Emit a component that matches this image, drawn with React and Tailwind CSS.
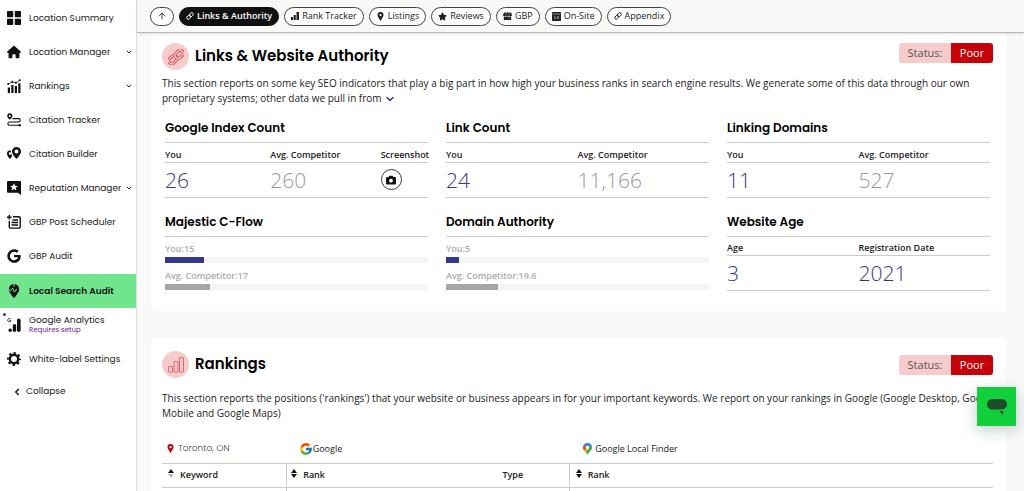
import { FaHouse, FaStar, FaCamera, FaGoogle } from "react-icons/fa6";
import { FcGoogle } from "react-icons/fc";
import { ArrowUp, ChevronDown, ChevronLeft } from "lucide-react";

const GridIcon = () => <svg viewBox="0 0 14 14" className="size-3.5" fill="currentColor">
    <rect width="6.2" height="6.2" rx="0.8" />
    <rect x="7.8" width="6.2" height="6.2" rx="0.8" />
    <rect y="7.8" width="6.2" height="6.2" rx="0.8" />
    <rect x="7.8" y="7.8" width="6.2" height="6.2" rx="0.8" />
  </svg>;

const TrendIcon = () => <svg viewBox="0 0 14 14" className="size-3.5" fill="currentColor">
    <path d="M0.8 8.5h2.2V14H0.8zM4.3 6h2.2v8H4.3zM7.8 7h2.2v7H7.8zM11.3 4.2h2.2V14h-2.2z" />
    <path d="M0.8 5.2 5 3l4 .8L13 1" fill="none" stroke="currentColor" strokeWidth="0.8" />
    <circle cx="1.2" cy="5" r="1" />
    <circle cx="5.2" cy="2.8" r="1" />
    <circle cx="9" cy="3.7" r="1" />
    <circle cx="12.8" cy="1.3" r="1" />
  </svg>;

const RouteIcon = () => <svg viewBox="0 0 14 14" className="size-3.5" fill="none">
    <path fillRule="evenodd" fill="currentColor" d="M2.8 0.3a2.6 2.6 0 0 1 2.6 2.6C5.4 4.5 2.8 6.6 2.8 6.6S0.2 4.5 0.2 2.9A2.6 2.6 0 0 1 2.8 0.3zM2.8 1.9a1 1 0 1 0 0 2 1 1 0 0 0 0-2z" />
    <path d="M5.5 5.6h6a1.7 1.7 0 0 1 0 3.4h-9a1.6 1.6 0 0 0 0 3.3h9.5" stroke="currentColor" strokeWidth="1.1" />
    <circle cx="12.7" cy="12.3" r="1.3" fill="currentColor" />
  </svg>;

const PinIcon = ({ className }) => <svg viewBox="0 0 24 24" className={className} fill="currentColor">
    <path fillRule="evenodd" d="M12 0a8 8 0 0 0-8 8c0 5 5 10 8 16 3-6 8-11 8-16a8 8 0 0 0-8-8zm0 5a3 3 0 1 1 0 6 3 3 0 0 1 0-6z" />
  </svg>;

const TwoPinsIcon = () => <svg viewBox="0 0 28 28" className="size-3.5" fill="currentColor">
    <path fillRule="evenodd" d="M19 0a9 9 0 0 0-9 9c0 6 9 15 9 15s9-9 9-15a9 9 0 0 0-9-9zm0 5a4 4 0 1 1 0 8 4 4 0 0 1 0-8z" />
    <path fillRule="evenodd" d="M6 7a6 6 0 0 0-6 6c0 5 6 11 6 11s3-3 4.5-6C8 14 7.5 11 8 7.5A6 6 0 0 0 6 7zm0 3.5a2.5 2.5 0 1 1 0 5 2.5 2.5 0 0 1 0-5z" />
  </svg>;

const ReviewIcon = () => <svg viewBox="0 0 14 14" className="size-3.5" fill="currentColor">
    <path fillRule="evenodd" d="M1 0h12a1 1 0 0 1 1 1v13l-3-2.2H1a1 1 0 0 1-1-1V1a1 1 0 0 1 1-1zM7 2.2 5.9 4.7l-2.7.3 2 1.8-.6 2.7L7 8.1l2.4 1.4-.6-2.7 2-1.8-2.7-.3z" />
  </svg>;

const PostIcon = () => <svg viewBox="0 0 14 14" className="size-3.5" fill="none" stroke="currentColor" strokeWidth="1.4">
    <path d="M6 1.7h6a1.2 1.2 0 0 1 1.2 1.2v9a1.2 1.2 0 0 1-1.2 1.2H3.5a1.2 1.2 0 0 1-1.2-1.2V6" />
    <path d="M2.3 0v4.6M0 2.3h4.6M5.5 5h5.5M4.5 7.5h6.5M4.5 10h6.5" />
  </svg>;

const AuditIcon = () => <svg viewBox="0 0 14 14" className="size-3.5">
    <path fill="currentColor" d="M7 0a5.2 5.2 0 0 0-5.2 5.2C1.8 8.8 7 14 7 14s5.2-5.2 5.2-8.8A5.2 5.2 0 0 0 7 0z" />
    <path d="M1 6.2h3.2L5.6 4l1.9 4.2 1.3-2.6H10M7 0v3" fill="none" stroke="#70e58d" strokeWidth="1" />
  </svg>;

const AnalyticsIcon = () => <svg viewBox="0 0 14 14" className="size-3.5" fill="currentColor">
    <rect x="10" y="0.5" width="3.6" height="13.5" rx="1.8" />
    <rect x="5.8" y="6" width="3.4" height="8" rx="1.7" />
    <circle cx="3.2" cy="12.3" r="1.7" />
    <path d="M3.7 0.9A1.7 1.7 0 1 0 4 2.7H2.4" fill="none" stroke="currentColor" strokeWidth="0.8" />
  </svg>;

const GearIcon = () => <svg viewBox="0 0 14 14" className="size-3.5" fill="none" stroke="currentColor">
    <circle cx="7" cy="7" r="4.2" strokeWidth="2.4" />
    <circle cx="7" cy="7" r="6" strokeWidth="1.9" strokeDasharray="2.35 2.362" strokeDashoffset="1.17" />
  </svg>;

const ChainIcon = ({ className }) => <svg viewBox="0 0 24 24" className={className} fill="none" stroke="currentColor" strokeWidth="2.8" strokeLinecap="round">
    <g transform="rotate(-45 12 12)">
      <rect x="0" y="7.5" width="13" height="9" rx="4.5" />
      <rect x="11" y="7.5" width="13" height="9" rx="4.5" />
    </g>
  </svg>;

// hollow chain: a wide red stroke with a narrower pink one laid over it
const OutlineChainIcon = () => <svg viewBox="0 0 24 24" className="size-4" fill="none">
    <g transform="rotate(-45 12 12)">
      <rect x="-1" y="7" width="14" height="9" rx="4.5" stroke="#d9474d" strokeWidth="4.6" />
      <rect x="-1" y="7" width="14" height="9" rx="4.5" stroke="#f7cacb" strokeWidth="2" />
      <rect x="11" y="8" width="14" height="9" rx="4.5" stroke="#d9474d" strokeWidth="4.6" />
      <rect x="11" y="8" width="14" height="9" rx="4.5" stroke="#f7cacb" strokeWidth="2" />
    </g>
  </svg>;

const OutlineBarsIcon = () => <svg viewBox="0 0 16 16" className="size-4" fill="none" stroke="#e06469">
    <rect x="0.5" y="9.5" width="4" height="5.5" rx="0.5" />
    <rect x="6" y="4.5" width="4" height="10.5" rx="0.5" />
    <rect x="11.5" y="0.5" width="4" height="14.5" rx="0.5" />
  </svg>;

const BarsIcon = () => <svg viewBox="0 0 8 8" className="size-2" fill="currentColor">
    <path d="M0 5h2v3H0zM2.6 3h2.2v5H2.6zM5.5 0H8v8H5.5z" />
  </svg>;

const StoreIcon = () => <svg viewBox="0 0 9 8" className="h-2 w-[9px]" fill="currentColor">
    <path d="M1 0.5h7L9 3.2a1.2 1.2 0 0 1-2.2.4 1.3 1.3 0 0 1-2.3 0 1.3 1.3 0 0 1-2.3 0A1.2 1.2 0 0 1 0 3.2z" />
    <path d="M.8 4.6h7.4V8H.8z" />
    <path d="M5.3 6h1.6M3 .5v2.3M6 .5v2.3" stroke="#fff" strokeWidth="0.4" />
  </svg>;

const BrowserIcon = () => <svg viewBox="0 0 9 9" className="size-[9px]">
    <rect width="9" height="9" rx="0.8" fill="currentColor" />
    <path d="M0.5 2h8" stroke="#fff" strokeWidth="0.5" />
    <path d="M3.8 4.5H2.5v2h1.3V5.7M5.3 4.5h1.3v2H5.3z" stroke="#fff" strokeWidth="0.4" fill="none" />
  </svg>;

const MapsIcon = () => <svg viewBox="0 0 18 24" className="h-3 w-[9px]">
    <path fill="#34a853" d="M9 0a9 9 0 0 0-9 9c0 6 7 8 9 15 2-7 9-9 9-15a9 9 0 0 0-9-9z" />
    <path fill="#4285f4" d="M2 3.5A9 9 0 0 1 17 5L9 9z" />
    <path fill="#ea4335" d="M2 3.3 9 9l-6 6.3C1 13 0 11.5 0 9a9 9 0 0 1 2-5.7z" />
    <path fill="#fbbc04" d="M2.6 15 10 6.5l2 5.5-6.5 6.2C4.5 17 3.3 16 2.6 15z" />
    <circle cx="9" cy="9" r="3.3" fill="#fff" />
  </svg>;

const SortIcon = ({ up = false }) => <svg viewBox="0 0 6 9" className="mb-1 h-[9px] w-1.5">
    <path d="M3 0l3 4H0z" fill="#111" />
    <path d="M3 9l3-4H0z" fill={up ? "#bbb" : "#111"} />
  </svg>;

const navItems = [
  { label: "Location Summary", icon: <GridIcon /> },
  { label: "Location Manager", icon: <FaHouse className="size-3.5" />, expandable: true },
  { label: "Rankings", icon: <TrendIcon />, expandable: true },
  { label: "Citation Tracker", icon: <RouteIcon /> },
  { label: "Citation Builder", icon: <TwoPinsIcon /> },
  { label: "Reputation Manager", icon: <ReviewIcon />, expandable: true },
  { label: "GBP Post Scheduler", icon: <PostIcon /> },
  { label: "GBP Audit", icon: <FaGoogle className="size-3.5" /> },
  { label: "Local Search Audit", icon: <AuditIcon />, active: true },
  { label: "Google Analytics", icon: <AnalyticsIcon />, note: "Requires setup" },
  { label: "White-label Settings", icon: <GearIcon /> }
];

const tabs = [
  { label: "Links & Authority", icon: <ChainIcon className="size-2" />, active: true },
  { label: "Rank Tracker", icon: <BarsIcon /> },
  { label: "Listings", icon: <PinIcon className="size-[9px]" /> },
  { label: "Reviews", icon: <FaStar className="size-[9px]" /> },
  { label: "GBP", icon: <StoreIcon /> },
  { label: "On-Site", icon: <BrowserIcon /> },
  { label: "Appendix", icon: <ChainIcon className="size-2" /> }
];

const Sidebar = () => {
  return <nav className="w-[137px] shrink-0 border-r border-[#ddd] bg-white pt-px font-['Poppins','Inter',sans-serif] text-[9px] text-[#222]">
      <ul>
        {navItems.map(item => <li key={item.label}>
            <a href="#" className={item.active ? "mt-px flex h-[34px] items-center gap-2 bg-[#70e58d] px-[7px] font-semibold text-[#111]" : "relative flex h-[34px] items-center gap-2 px-[7px]"}>
              {item.note && <span className="absolute top-[5px] left-[3px] size-[3px] rounded-full bg-[#6a1b9a]" />}
              <span className="text-[#111]">{item.icon}</span>
              <span className="flex-1 whitespace-nowrap leading-[10px]">
                {item.label}
                {item.note && <span className="block text-[7px] text-[#6a1b9a]">{item.note}</span>}
              </span>
              {item.expandable && <ChevronDown className="-mx-1 size-2 shrink-0" strokeWidth={3} />}
            </a>
          </li>)}
      </ul>
      <button type="button" className="flex h-8 items-center gap-1 px-3">
        <ChevronLeft className="size-2.5" strokeWidth={4} />
        Collapse
      </button>
    </nav>;
};

const TabBar = () => {
  return <header className="z-10 flex h-[33px] shrink-0 items-center gap-[5px] border-b border-[#bbb] bg-[#f8f8f6] px-[13px] shadow-sm">
      <button type="button" aria-label="Back to top" className="flex h-[19px] w-6 items-center justify-center rounded-full border border-[#444] bg-white">
        <ArrowUp className="size-2.5" strokeWidth={2} />
      </button>
      {tabs.map(tab => <button key={tab.label} type="button" className={tab.active ? "flex h-[19px] items-center gap-[3px] whitespace-nowrap rounded-full border border-[#111] bg-[#111] px-1.5 text-[9px] font-semibold text-white" : "flex h-[19px] items-center gap-[3px] whitespace-nowrap rounded-full border border-[#444] bg-white px-1.5 text-[9px] text-[#222]"}>
          {tab.icon}
          {tab.label}
        </button>)}
    </header>;
};

const SectionHeader = ({ icon, title, className }) => {
  return <div className={`flex justify-between ${className}`}>
      <div className="flex items-center gap-1.5">
        <span className="flex size-[27px] items-center justify-center rounded-full bg-[#f7cacb]">{icon}</span>
        <h2 className="font-['Poppins','Inter',sans-serif] text-[15px] font-semibold text-black">{title}</h2>
      </div>
      <div className="flex h-5 items-center overflow-hidden rounded-[3px] text-[11px] leading-5">
        <span className="w-[52px] bg-[#f7cacb] text-center text-[#555]">Status:</span>
        <span className="w-[42px] bg-[#c60309] text-center font-medium text-white">Poor</span>
      </div>
    </div>;
};

const TileTitle = ({ children }) => <h3 className="h-[30px] border-b border-[#ccc] font-['Poppins','Inter',sans-serif] text-[12px] leading-[29px] font-semibold text-black">
    {children}
  </h3>;

const StatTile = ({ title, stats }) => {
  return <section>
      <TileTitle>{title}</TileTitle>
      <table className="w-full table-fixed text-left">
        {stats.length === 3 && <colgroup>
            <col className="w-[40%]" />
            <col className="w-[42%]" />
            <col />
          </colgroup>}
        <thead>
          <tr className="h-[19px] border-b border-[#ccc] text-[9px] leading-[10px] text-[#222]">
            {stats.map(stat => <th key={stat.label} className="pt-[5px] font-semibold whitespace-nowrap">{stat.label}</th>)}
          </tr>
        </thead>
        <tbody>
          <tr className="h-[35px] border-b border-[#ccc] text-[21px] leading-[30px] font-light">
            {stats.map(stat => <td key={stat.label} className={stat.muted ? "text-[#999]" : "text-[#33388b]"}>{stat.value}</td>)}
          </tr>
        </tbody>
      </table>
    </section>;
};

const Bar = ({ label, value, color }) => <div>
    <div className="text-[9px] leading-[11px] font-semibold text-[#aaa]">{label}:{value}</div>
    <div className="mt-[3px] h-1.5 bg-[#f5f5f5]">
      <div className={`h-full ${color}`} style={{ width: `${value}%` }} />
    </div>
  </div>;

const BarTile = ({ title, you, competitor }) => {
  return <section>
      <TileTitle>{title}</TileTitle>
      <div className="flex flex-col gap-[7px] pt-1.5">
        <Bar label="You" value={you} color="bg-[#33388b]" />
        <Bar label="Avg. Competitor" value={competitor} color="bg-[#a6a6a6]" />
      </div>
    </section>;
};

const ScreenshotButton = () => <button type="button" aria-label="View screenshot" className="flex size-[21px] items-center justify-center rounded-full border border-[#333] text-[#111]">
    <FaCamera className="size-2.5" />
  </button>;

const LinksSection = () => {
  return <section className="rounded-b bg-white pt-2.5 pr-[13px] pb-5 pl-[11px]">
      <SectionHeader icon={<OutlineChainIcon />} title="Links & Website Authority" className="items-start" />
      <p className="mt-1.5 text-[10px] leading-[15px]">
        This section reports on some key SEO indicators that play a big part in how high your business ranks in search engine results. We generate some of this data through our own proprietary systems; other data we pull in from{" "}
        <button type="button" aria-label="Read more" className="align-middle text-[#33388b]">
          <ChevronDown className="size-3" strokeWidth={3} />
        </button>
      </p>
      <div className="mt-[7px] grid grid-cols-3 gap-x-[18px] gap-y-[9px] px-[3px]">
        <StatTile title="Google Index Count" stats={[{ label: "You", value: "26" }, { label: "Avg. Competitor", value: "260", muted: true }, { label: "Screenshot", value: <ScreenshotButton /> }]} />
        <StatTile title="Link Count" stats={[{ label: "You", value: "24" }, { label: "Avg. Competitor", value: "11,166", muted: true }]} />
        <StatTile title="Linking Domains" stats={[{ label: "You", value: "11" }, { label: "Avg. Competitor", value: "527", muted: true }]} />
        <BarTile title="Majestic C-Flow" you={15} competitor={17} />
        <BarTile title="Domain Authority" you={5} competitor={19.6} />
        <StatTile title="Website Age" stats={[{ label: "Age", value: "3" }, { label: "Registration Date", value: "2021" }]} />
      </div>
    </section>;
};

const RankingsSection = () => {
  return <section className="rounded-t bg-white pt-[13px] pr-[13px] pl-[11px]">
      <SectionHeader icon={<OutlineBarsIcon />} title="Rankings" className="items-center" />
      <p className="mt-[13px] -mr-2 text-[10px] leading-[15px]">
        This section reports the positions ('rankings') that your website or business appears in for your important keywords. We report on your rankings in Google (Google Desktop, Google Mobile and Google Maps)
      </p>
      <table className="mt-3.5 w-full table-fixed text-left text-[9px]">
        <colgroup>
          <col className="w-[15%]" />
          <col className="w-[25%]" />
          <col className="w-[9%]" />
          <col />
        </colgroup>
        <thead>
          <tr className="h-7 border-b border-[#ccc]">
            <th className="px-1 font-normal text-[#444]">
              <span className="flex items-center gap-[3px] font-['Poppins','Inter',sans-serif] font-light">
                <PinIcon className="size-[9px] text-[#c60309]" />
                Toronto, ON
              </span>
            </th>
            <th colSpan={2} className="px-3 font-normal">
              <span className="flex items-center"><FcGoogle className="size-3.5" />Google</span>
            </th>
            <th className="px-3.5 font-normal">
              <span className="flex items-center gap-[3px]"><MapsIcon />Google Local Finder</span>
            </th>
          </tr>
          <tr className="h-6 border-b border-[#ccc]">
            <th className="px-1.5 font-semibold"><span className="flex items-center gap-1.5"><SortIcon up />Keyword</span></th>
            <th className="border-l border-[#ccc] px-1 font-semibold"><span className="flex items-center gap-1.5"><SortIcon />Rank</span></th>
            <th className="px-2 font-semibold">Type</th>
            <th className="border-l border-[#ccc] px-1.5 font-semibold"><span className="flex items-center gap-1.5"><SortIcon />Rank</span></th>
          </tr>
        </thead>
        <tbody>
          <tr className="h-8">
            <td />
            <td className="border-l border-[#ccc]" />
            <td />
            <td className="border-l border-[#ccc]" />
          </tr>
        </tbody>
      </table>
    </section>;
};

const App = () => {
  return <div className="flex h-screen overflow-hidden bg-[#f9f9f9] font-['Open_Sans',sans-serif] text-[#222]">
      <Sidebar />
      <div className="flex min-w-0 flex-1 flex-col">
        <TabBar />
        <main className="flex min-h-0 flex-1 flex-col gap-[27px] overflow-hidden pr-[18px] pl-3.5">
          <LinksSection />
          <RankingsSection />
        </main>
      </div>
      <button type="button" aria-label="Open chat" className="fixed right-2 bottom-[65px] z-20 flex size-[39px] items-center justify-center bg-[#12d03c] shadow-[0_4px_16px_rgba(0,60,50,0.25)]">
        <svg viewBox="0 0 20 16" className="h-4 w-5" fill="#1d4d2b">
          <rect width="20" height="10.5" rx="5.2" />
          <path d="M12 12h4v4z" />
        </svg>
      </button>
    </div>;
};
export default App;
